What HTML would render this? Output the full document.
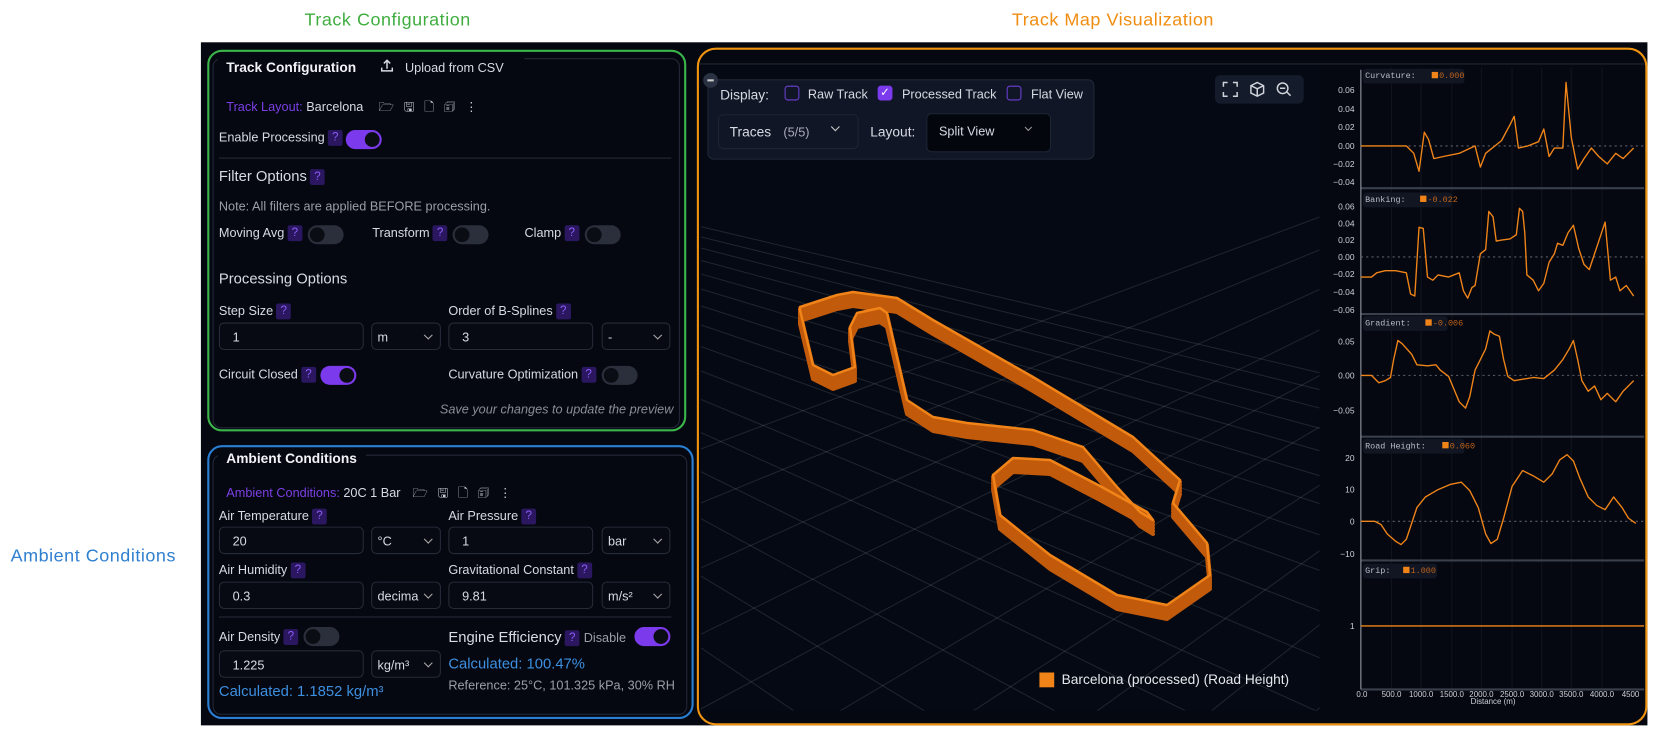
<!DOCTYPE html>
<html><head><meta charset="utf-8"><style>
*{box-sizing:border-box;margin:0;padding:0}
body{width:1658px;height:734px;background:#fff;position:relative;overflow:hidden;font-family:"Liberation Sans",sans-serif}
#w{position:absolute;left:0;top:0;width:1568px;height:694px;overflow:hidden;transform:scale(1.05740);transform-origin:0 0}
.a{position:absolute}
.app{left:190px;top:40px;width:1368px;height:646px;background:#050811}
.t{color:#d7dae2;font-size:12px;white-space:nowrap}
.h{color:#f1f3f7;font-size:13px;font-weight:bold}
.q{display:inline-block;width:14px;height:15px;background:#2b1760;color:#8b5cf6;font-size:11px;text-align:center;line-height:15px;border-radius:2px;vertical-align:middle;margin-left:3px}
.tg{width:34px;height:18px;border-radius:9px;background:#2a2f3b}
.tg::after{content:"";position:absolute;left:2px;top:2px;width:14px;height:14px;border-radius:7px;background:#0b0d14}
.tg.on{background:#7c3aed}
.tg.on::after{left:18px}
.in{height:26px;border:1px solid #262b38;border-radius:5px;background:#070a12;color:#d7dae2;font-size:12px;padding:6px 12px}
.sel{height:26px;border:1px solid #262b38;border-radius:5px;background:#070a12;color:#d7dae2;font-size:12px;padding:6px 5px}
.sel::after{content:"";position:absolute;right:8px;top:8px;width:5px;height:5px;border-right:1.3px solid #aaa;border-bottom:1.3px solid #aaa;transform:rotate(45deg)}
.card{border:1px solid #242938;border-radius:8px}
.ann{font-size:17px;font-family:"Liberation Sans",sans-serif;letter-spacing:0.5px}
.ic{font-size:12px;color:#c8ccd6}
.yl{font-size:8px;fill:#cdd0d6;text-anchor:end;font-family:"Liberation Sans",sans-serif}
.lab{font-size:8px;fill:#b8bcc6;font-family:"Liberation Mono",monospace}
.val{font-size:8px;fill:#c0621a;font-family:"Liberation Mono",monospace}
</style></head><body><div id="w">
<div class="a ann" style="left:288px;top:9px;color:#3fae3f">Track Configuration</div>
<div class="a ann" style="left:957px;top:9px;color:#f08c10">Track Map Visualization</div>
<div class="a ann" style="left:10px;top:516px;color:#2f7fd0">Ambient Conditions</div>

<div class="a app"></div>

<div class="a card" style="left:201px;top:55px;width:442px;height:350px"></div>
<div class="a" style="left:206px;top:54px;width:290px;height:20px;background:#050811"></div>
<div class="a h" style="left:214px;top:56px">Track Configuration</div>
<svg class="a" style="left:359px;top:55px" width="14" height="14" viewBox="0 0 14 14" fill="none" stroke="#d7dae2" stroke-width="1.4"><path d="M7 10V2M4 5l3-3 3 3M2 9v3h10V9"/></svg>
<div class="a t" style="left:383px;top:57px">Upload from CSV</div>
<div class="a t" style="left:214px;top:94px"><span style="color:#7b3fe4">Track Layout:</span> Barcelona</div>
<div class="a ic" style="left:358px;top:92px;letter-spacing:9px">🗁🖫🗋🗊⋮</div>
<div class="a t" style="left:207px;top:123px">Enable Processing<span class="q">?</span></div>
<div class="a tg on" style="left:327px;top:123px"></div>
<div class="a" style="left:207px;top:149px;width:428px;height:1px;background:#262b38"></div>
<div class="a t" style="left:207px;top:158px;font-size:14px">Filter Options<span class="q">?</span></div>
<div class="a t" style="left:207px;top:188px;color:#9a9ea8">Note: All filters are applied BEFORE processing.</div>
<div class="a t" style="left:207px;top:213px">Moving Avg<span class="q">?</span></div>
<div class="a tg" style="left:291px;top:213px"></div>
<div class="a t" style="left:352px;top:213px">Transform<span class="q">?</span></div>
<div class="a tg" style="left:428px;top:213px"></div>
<div class="a t" style="left:496px;top:213px">Clamp<span class="q">?</span></div>
<div class="a tg" style="left:553px;top:213px"></div>
<div class="a t" style="left:207px;top:255px;font-size:14px">Processing Options</div>
<div class="a t" style="left:207px;top:287px">Step Size<span class="q">?</span></div>
<div class="a t" style="left:424px;top:287px">Order of B-Splines<span class="q">?</span></div>
<div class="a in" style="left:207px;top:305px;width:137px">1</div>
<div class="a sel" style="left:351px;top:305px;width:66px">m</div>
<div class="a in" style="left:424px;top:305px;width:137px">3</div>
<div class="a sel" style="left:569px;top:305px;width:65px">-</div>
<div class="a t" style="left:207px;top:347px">Circuit Closed<span class="q">?</span></div>
<div class="a tg on" style="left:303px;top:346px"></div>
<div class="a t" style="left:424px;top:347px">Curvature Optimization<span class="q">?</span></div>
<div class="a tg" style="left:569px;top:346px"></div>
<div class="a t" style="left:416px;top:380px;color:#8a8e98;font-style:italic">Save your changes to update the preview</div>
<div class="a" style="left:196px;top:47px;width:453px;height:361px;border:2px solid #3bb54a;border-radius:14px"></div>

<div class="a card" style="left:201px;top:430px;width:449px;height:246px"></div>
<div class="a" style="left:206px;top:424px;width:140px;height:16px;background:#050811"></div>
<div class="a h" style="left:214px;top:426px">Ambient Conditions</div>
<div class="a t" style="left:214px;top:459px"><span style="color:#7b3fe4">Ambient Conditions:</span> 20C 1 Bar</div>
<div class="a ic" style="left:390px;top:457px;letter-spacing:9px">🗁🖫🗋🗊⋮</div>
<div class="a t" style="left:207px;top:481px">Air Temperature<span class="q">?</span></div>
<div class="a t" style="left:424px;top:481px">Air Pressure<span class="q">?</span></div>
<div class="a in" style="left:207px;top:498px;width:137px">20</div>
<div class="a sel" style="left:351px;top:498px;width:66px">°C</div>
<div class="a in" style="left:424px;top:498px;width:137px">1</div>
<div class="a sel" style="left:569px;top:498px;width:65px">bar</div>
<div class="a t" style="left:207px;top:532px">Air Humidity<span class="q">?</span></div>
<div class="a t" style="left:424px;top:532px">Gravitational Constant<span class="q">?</span></div>
<div class="a in" style="left:207px;top:550px;width:137px">0.3</div>
<div class="a sel" style="left:351px;top:550px;width:66px">decima</div>
<div class="a in" style="left:424px;top:550px;width:137px">9.81</div>
<div class="a sel" style="left:569px;top:550px;width:65px">m/s²</div>
<div class="a" style="left:207px;top:583px;width:428px;height:1px;background:#262b38"></div>
<div class="a t" style="left:207px;top:595px">Air Density<span class="q">?</span></div>
<div class="a tg" style="left:287px;top:593px"></div>
<div class="a t" style="left:424px;top:594px;font-size:14px">Engine Efficiency<span class="q">?</span> <span style="font-size:12px;color:#9a9ea8">Disable</span></div>
<div class="a tg on" style="left:600px;top:593px"></div>
<div class="a in" style="left:207px;top:615px;width:137px">1.225</div>
<div class="a sel" style="left:351px;top:615px;width:66px">kg/m³</div>
<div class="a t" style="left:424px;top:619px;color:#3d8fe0;font-size:14px">Calculated: 100.47%</div>
<div class="a t" style="left:207px;top:645px;color:#3d8fe0;font-size:14px">Calculated: 1.1852 kg/m³</div>
<div class="a t" style="left:424px;top:641px;color:#9a9ea8">Reference: 25°C, 101.325 kPa, 30% RH</div>
<div class="a" style="left:196px;top:421px;width:460px;height:259px;border:2px solid #2a7fd4;border-radius:14px"></div>

<svg class="a" style="left:663px;top:62px" width="585" height="610">
<rect width="585" height="610" fill="#050913"/>
<g stroke="#ffffff" stroke-opacity="0.11" stroke-width="1">
<line x1="-900" y1="-60" x2="-200" y2="700"/><line x1="-900" y1="-60" x2="-60" y2="700"/><line x1="-900" y1="-60" x2="80" y2="700"/><line x1="-900" y1="-60" x2="220" y2="700"/><line x1="-900" y1="-60" x2="360" y2="700"/><line x1="-900" y1="-60" x2="500" y2="700"/><line x1="-900" y1="-60" x2="640" y2="700"/><line x1="-900" y1="-60" x2="780" y2="700"/><line x1="-900" y1="-60" x2="920" y2="700"/><line x1="-900" y1="-60" x2="1060" y2="700"/><line x1="-900" y1="-60" x2="1200" y2="700"/><line x1="-900" y1="-60" x2="1340" y2="700"/><line x1="-900" y1="-60" x2="1480" y2="700"/><line x1="-900" y1="-60" x2="1620" y2="700"/><line x1="-900" y1="-60" x2="1760" y2="700"/><line x1="-900" y1="-60" x2="1900" y2="700"/><line x1="-900" y1="-60" x2="2040" y2="700"/><line x1="-900" y1="-60" x2="2180" y2="700"/><line x1="-900" y1="-60" x2="2320" y2="700"/>
<line x1="1500" y1="-200" x2="-900" y2="700"/><line x1="1500" y1="-200" x2="-700" y2="700"/><line x1="1500" y1="-200" x2="-500" y2="700"/><line x1="1500" y1="-200" x2="-330" y2="700"/><line x1="1500" y1="-200" x2="-170" y2="700"/><line x1="1500" y1="-200" x2="-20" y2="700"/><line x1="1500" y1="-200" x2="120" y2="700"/><line x1="1500" y1="-200" x2="250" y2="700"/><line x1="1500" y1="-200" x2="370" y2="700"/><line x1="1500" y1="-200" x2="480" y2="700"/><line x1="1500" y1="-200" x2="590" y2="700"/><line x1="1500" y1="-200" x2="690" y2="700"/><line x1="1500" y1="-200" x2="780" y2="700"/><line x1="1500" y1="-200" x2="870" y2="700"/><line x1="1500" y1="-200" x2="950" y2="700"/><line x1="1500" y1="-200" x2="1030" y2="700"/><line x1="1500" y1="-200" x2="1100" y2="700"/>
</g>
<rect x="320" y="574" width="14" height="14" fill="#f08418"/>
<text x="341" y="585" font-size="13" fill="#e6e8ee" font-family="Liberation Sans,sans-serif">Barcelona (processed) (Road Height)</text>
</svg>
<div class="a" style="left:669px;top:75px;width:366px;height:76px;background:#111726;border:1px solid #232a3a;border-radius:6px;opacity:.95"></div>
<div class="a" style="left:665px;top:69px;width:14px;height:14px;border-radius:7px;background:#2a3142"></div>
<div class="a" style="left:669px;top:75px;width:6px;height:1.5px;background:#ccc"></div>
<div class="a t" style="left:681px;top:82px;font-size:13px">Display:</div>
<div class="a" style="left:742px;top:81px;width:14px;height:14px;border:1.5px solid #6d3fd6;border-radius:3px"></div>
<div class="a t" style="left:764px;top:82px">Raw Track</div>
<div class="a" style="left:830px;top:81px;width:14px;height:14px;background:#7c3aed;border-radius:3px;color:#fff;font-size:11px;text-align:center;line-height:14px">✓</div>
<div class="a t" style="left:853px;top:82px">Processed Track</div>
<div class="a" style="left:952px;top:81px;width:14px;height:14px;border:1.5px solid #6d3fd6;border-radius:3px"></div>
<div class="a t" style="left:975px;top:82px">Flat View</div>
<div class="a" style="left:679px;top:108px;width:133px;height:33px;background:#101626;border:1px solid #1d2434;border-radius:5px"></div>
<div class="a t" style="left:690px;top:117px;font-size:13px">Traces <span style="font-size:12px;color:#aab;margin-left:8px">(5/5)</span></div>
<div class="a" style="left:787px;top:117px;width:6px;height:6px;border-right:1.5px solid #ccc;border-bottom:1.5px solid #ccc;transform:rotate(45deg)"></div>
<div class="a t" style="left:823px;top:117px;font-size:13px">Layout:</div>
<div class="a" style="left:876px;top:107px;width:118px;height:37px;background:#03060d;border:1px solid #1d2434;border-radius:5px"></div>
<div class="a t" style="left:888px;top:117px">Split View</div>
<div class="a" style="left:970px;top:118px;width:5px;height:5px;border-right:1.2px solid #999;border-bottom:1.2px solid #999;transform:rotate(45deg)"></div>
<div class="a" style="left:1149px;top:71px;width:84px;height:27px;background:#141b2a;border-radius:5px"></div>
<svg class="a" style="left:1156px;top:77px" width="72" height="15" fill="none" stroke="#d0d3da" stroke-width="1.4">
<path d="M1 5V1h4M10 1h4v4M14 10v4h-4M5 14H1v-4"/>
<path d="M33 1l6 3v7l-6 3-6-3V4zM27 4l6 3 6-3M33 7v7"/>
<circle cx="57" cy="6.5" r="5"/><path d="M54.5 6.5h5M61 10l3.5 3.5"/>
</svg>
<svg class="a" style="left:1248px;top:62px" width="307" height="612">
<rect width="307" height="612" fill="#050811"/>
<g transform="translate(-1248,-62)">
<g stroke="#ffffff" stroke-opacity="0.05"><line x1="1316" y1="64" x2="1316" y2="652"/><line x1="1344" y1="64" x2="1344" y2="652"/><line x1="1373" y1="64" x2="1373" y2="652"/><line x1="1401" y1="64" x2="1401" y2="652"/><line x1="1430" y1="64" x2="1430" y2="652"/><line x1="1458" y1="64" x2="1458" y2="652"/><line x1="1486" y1="64" x2="1486" y2="652"/><line x1="1515" y1="64" x2="1515" y2="652"/></g>
<g stroke="#3a3f4c" stroke-width="2"><line x1="1287" y1="178" x2="1555" y2="178"/><line x1="1287" y1="297" x2="1555" y2="297"/><line x1="1287" y1="413" x2="1555" y2="413"/><line x1="1287" y1="530" x2="1555" y2="530"/><line x1="1287" y1="652" x2="1555" y2="652"/></g>
<line x1="1287" y1="66" x2="1287" y2="652" stroke="#9a9ea8"/>
<g stroke="#5a5f6a" stroke-dasharray="2,3"><line x1="1287" y1="138" x2="1555" y2="138"/><line x1="1287" y1="243" x2="1555" y2="243"/><line x1="1287" y1="355" x2="1555" y2="355"/><line x1="1287" y1="493" x2="1555" y2="493"/></g>
<g fill="#111622"><rect x="1289" y="65" width="96" height="14" rx="3"/><rect x="1289" y="182" width="84" height="14" rx="3"/><rect x="1289" y="299" width="80" height="14" rx="3"/><rect x="1289" y="415" width="96" height="14" rx="3"/><rect x="1289" y="533" width="70" height="14" rx="3"/></g>
<text class="lab" x="1291" y="74">Curvature:</text><rect x="1354" y="68" width="6" height="6" fill="#f08418"/><text class="val" x="1361" y="74">0.000</text>
<text class="lab" x="1291" y="191">Banking:</text><rect x="1343" y="185" width="6" height="6" fill="#f08418"/><text class="val" x="1350" y="191">-0.022</text>
<text class="lab" x="1291" y="308">Gradient:</text><rect x="1348" y="302" width="6" height="6" fill="#f08418"/><text class="val" x="1355" y="308">-0.006</text>
<text class="lab" x="1291" y="424">Road Height:</text><rect x="1364" y="418" width="6" height="6" fill="#f08418"/><text class="val" x="1371" y="424">0.060</text>
<text class="lab" x="1291" y="542">Grip:</text><rect x="1327" y="536" width="6" height="6" fill="#f08418"/><text class="val" x="1334" y="542">1.000</text>
<g class="yl"><text x="1281" y="88">0.06</text><text x="1281" y="106">0.04</text><text x="1281" y="123">0.02</text><text x="1281" y="141">0.00</text><text x="1281" y="158">−0.02</text><text x="1281" y="175">−0.04</text>
<text x="1281" y="198">0.06</text><text x="1281" y="214">0.04</text><text x="1281" y="230">0.02</text><text x="1281" y="246">0.00</text><text x="1281" y="262">−0.02</text><text x="1281" y="279">−0.04</text><text x="1281" y="296">−0.06</text>
<text x="1281" y="326">0.05</text><text x="1281" y="358">0.00</text><text x="1281" y="391">−0.05</text>
<text x="1281" y="436">20</text><text x="1281" y="466">10</text><text x="1281" y="496">0</text><text x="1281" y="527">−10</text>
<text x="1281" y="595">1</text></g>
<g font-size="7.5" fill="#cdd0d6" font-family="Liberation Sans,sans-serif" text-anchor="middle"><text x="1288" y="659">0.0</text><text x="1316" y="659">500.0</text><text x="1344" y="659">1000.0</text><text x="1373" y="659">1500.0</text><text x="1401" y="659">2000.0</text><text x="1430" y="659">2500.0</text><text x="1458" y="659">3000.0</text><text x="1486" y="659">3500.0</text><text x="1515" y="659">4000.0</text><text x="1542" y="659">4500</text><text x="1412" y="666">Distance (m)</text></g>
<g fill="none" stroke="#f08418" stroke-width="1.3" stroke-linejoin="round">
<polyline points="1287,138 1330,138 1337,145 1342,162 1347,125 1351,132 1356,150 1365,148 1380,145 1395,138 1400,158 1405,145 1420,133 1428,118 1432,110 1436,140 1445,138 1455,134 1460,122 1465,148 1470,140 1478,140 1481,78 1486,130 1492,160 1498,150 1505,140 1512,148 1520,155 1528,145 1535,150 1545,140"/>
<polyline points="1287,262 1297,262 1302,258 1310,256 1320,256 1330,258 1334,278 1338,280 1342,215 1346,216 1350,262 1355,265 1360,260 1370,262 1380,258 1384,275 1388,282 1392,272 1395,270 1400,240 1405,236 1408,200 1412,205 1415,228 1420,227 1428,226 1434,222 1437,197 1440,200 1442,220 1444,260 1450,265 1455,275 1460,268 1465,248 1470,240 1473,230 1478,232 1483,220 1488,213 1493,235 1498,250 1503,255 1508,240 1513,225 1518,210 1523,265 1528,262 1532,275 1538,270 1545,280"/>
<polyline points="1287,355 1297,355 1304,362 1310,360 1315,357 1318,340 1322,322 1326,325 1335,335 1340,345 1350,346 1358,345 1362,350 1370,356 1375,368 1380,380 1386,386 1390,375 1395,350 1400,340 1405,330 1409,313 1413,316 1418,318 1422,340 1426,356 1432,360 1450,357 1460,358 1470,350 1478,340 1484,330 1488,322 1492,340 1496,360 1502,370 1508,365 1514,378 1520,372 1528,380 1535,370 1545,360"/>
<polyline points="1287,493 1300,493 1306,496 1312,505 1320,512 1325,515 1330,510 1340,480 1348,470 1360,463 1372,458 1382,456 1390,464 1398,480 1405,505 1410,514 1416,510 1422,490 1430,460 1440,445 1450,450 1460,456 1468,448 1475,435 1482,430 1488,436 1494,452 1502,470 1510,478 1518,482 1526,470 1534,480 1540,490 1547,495"/>
<line x1="1287" y1="592" x2="1555" y2="592"/>
</g></g></svg>
<div class="a" style="left:662px;top:60px;width:893px;height:1px;background:#222836"></div>
<div class="a" style="left:659px;top:45px;width:899px;height:641px;border:2px solid #f0930f;border-radius:18px"></div>
</div>
<svg class="a" style="left:0;top:0" width="1658" height="734">
<defs><polyline id="tr" points="800,307 837,295 853,292 897,298 933,320 1033,377 1133,437 1180,480 1173,503 1207,543 1210,575 1167,605 1117,595 1050,555 1000,515 993,475 1013,458 1050,460 1100,486 1147,512 1153,520 1140,512 1117,487 1083,447 1033,430 967,423 933,417 907,400 900,370 887,313 880,308 857,313 850,327 855,367 833,375 813,365 800,310 800,307" fill="none" stroke-linejoin="round" stroke-linecap="round"/></defs>
<g stroke="#c25a0c" stroke-width="4">
<use href="#tr" transform="translate(0,14)"/><use href="#tr" transform="translate(0,11)"/><use href="#tr" transform="translate(0,8)"/><use href="#tr" transform="translate(0,5)"/><use href="#tr" transform="translate(0,2)"/>
</g>
<use href="#tr" stroke="#f08418" stroke-width="2.5"/>
</svg>
</body></html>
